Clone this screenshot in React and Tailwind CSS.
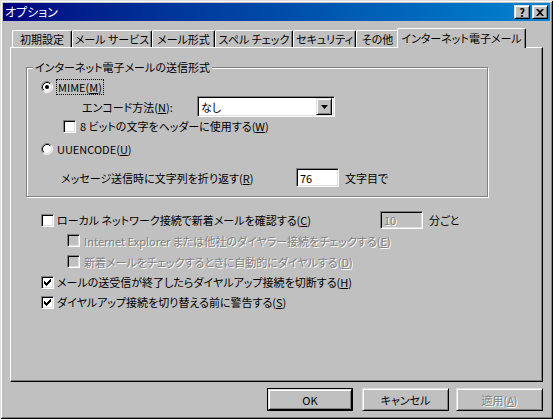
import React from "react";
import clsx from "clsx";

const raised =
  "border border-t-[#dfdfdf] border-l-[#dfdfdf] border-b-black border-r-black shadow-[inset_1px_1px_0_#fff,inset_-1px_-1px_0_#808080]";
const sunken =
  "border border-t-[#808080] border-l-[#808080] border-b-white border-r-white shadow-[inset_1px_1px_0_#000,inset_-1px_-1px_0_#dfdfdf]";
const dim = "text-[#808080] [text-shadow:1px_1px_0_#fff]";

function Check({ checked, disabled }) {
  return (
    <span
      className={clsx(
        "flex h-[13px] w-[13px] shrink-0 items-center justify-center",
        sunken,
        disabled ? "bg-[#c0c0c0]" : "bg-white"
      )}
    >
      {checked && (
        <svg width="7" height="7" viewBox="0 0 7 7">
          <path
            d="M0 2h1v3h-1z M1 3h1v3h-1z M2 4h1v3h-1z M3 3h1v3h-1z M4 2h1v3h-1z M5 1h1v3h-1z M6 0h1v3h-1z"
            fill="#000"
          />
        </svg>
      )}
    </span>
  );
}

function Radio({ checked }) {
  return (
    <svg width="12" height="12" viewBox="0 0 12 12" className="shrink-0">
      <circle cx="6" cy="6" r="4.5" fill="#fff" />
      <path d="M2.11 9.89 A5.5 5.5 0 0 1 9.89 2.11" stroke="#808080" fill="none" />
      <path d="M9.89 2.11 A5.5 5.5 0 0 1 2.11 9.89" stroke="#fff" fill="none" />
      <path d="M2.82 9.18 A4.5 4.5 0 0 1 9.18 2.82" stroke="#000" fill="none" />
      <path d="M9.18 2.82 A4.5 4.5 0 0 1 2.82 9.18" stroke="#dfdfdf" fill="none" />
      {checked && <circle cx="6" cy="6" r="2" fill="#000" />}
    </svg>
  );
}

function Tab({ w, children }) {
  return (
    <div
      className={clsx(
        "flex h-[17px] items-center justify-center rounded-t-[2px] border-l border-t border-r border-l-white border-t-white border-r-black shadow-[inset_-1px_0_0_#808080]",
        w
      )}
    >
      {children}
    </div>
  );
}

function Btn({ w, def, disabled, children }) {
  return (
    <div className={clsx("h-[23px]", w, def && "border border-black")}>
      <div
        className={clsx(
          "flex h-full w-full items-center justify-center",
          raised,
          disabled && dim
        )}
      >
        {children}
      </div>
    </div>
  );
}

export default function App() {
  return (
    <div className="h-[419px] w-[553px] bg-[#c0c0c0] p-[3px] font-['Noto_Sans_CJK_JP','Noto_Sans',sans-serif] text-[11px] leading-[14px] whitespace-nowrap text-black [font-feature-settings:'palt'] shadow-[inset_1px_1px_0_#dfdfdf,inset_-1px_-1px_0_#000,inset_2px_2px_0_#fff,inset_-2px_-2px_0_#808080]">
      {/* title bar */}
      <div className="flex h-[18px] items-center justify-between bg-gradient-to-r from-[#000080] to-[#1084d0] pl-[2px] pr-[2px]">
        <span className="text-[12px] text-white">オプション</span>
        <div className="flex gap-[2px]">
          <div className={clsx("flex h-[14px] w-[16px] items-center justify-center bg-[#c0c0c0] text-[11px] font-bold leading-none", raised)}>
            ?
          </div>
          <div className={clsx("flex h-[14px] w-[16px] items-center justify-center bg-[#c0c0c0]", raised)}>
            <svg width="8" height="7" viewBox="0 0 8 7">
              <path d="M0 0h2l2 2 2-2h2l-3 3.5 3 3.5h-2l-2-2-2 2h-2l3-3.5z" fill="#000" />
            </svg>
          </div>
        </div>
      </div>

      <div className="px-[7px]">
        {/* tabs */}
        <div className="mt-[7px] flex h-[19px] items-end pl-[2px]">
          <Tab w="w-[60px]">初期設定</Tab>
          <Tab w="w-[80px]">メール サービス</Tab>
          <Tab w="w-[63px]">メール形式</Tab>
          <Tab w="w-[78px]">スペル チェック</Tab>
          <Tab w="w-[63px]">セキュリティ</Tab>
          <Tab w="w-[43px]">その他</Tab>
          <div className="relative z-10 -mb-px -ml-[2px] flex h-[20px] w-[129px] justify-center rounded-t-[2px] border-l border-t border-r border-l-white border-t-white border-r-black bg-[#c0c0c0] pt-[2px] shadow-[inset_-1px_0_0_#808080]">
            インターネット電子メール
          </div>
        </div>

        {/* panel */}
        <div className="h-[335px] border border-t-white border-l-white border-b-black border-r-black shadow-[inset_-1px_-1px_0_#808080]">
          <div className="relative ml-[15px] mt-[19px] flex h-[130px] w-[462px] flex-col border border-[#808080] shadow-[inset_1px_1px_0_#fff,1px_1px_0_#fff]">
            <span className="absolute left-[6px] top-[-8px] bg-[#c0c0c0] px-[2px]">
              インターネット電子メールの送信形式
            </span>

            <div className="mt-[11px] flex h-[16px] items-center pl-[14px]">
              <Radio checked />
              <span className="ml-[3px] border border-dotted border-black px-px leading-[14px]">
                MIME(<u>M</u>)
              </span>
            </div>

            <div className="mt-px flex h-[21px] items-center pl-[55px]">
              <span className="w-[115px]">
                エンコード方法(<u>N</u>):
              </span>
              <div className={clsx("flex h-[21px] w-[138px] items-center bg-white p-[2px]", sunken)}>
                <span className="flex-1 pl-[1px]">なし</span>
                <div className={clsx("flex h-[17px] w-[16px] items-center justify-center bg-[#c0c0c0]", raised)}>
                  <svg width="7" height="4" viewBox="0 0 7 4">
                    <path d="M0 0h7l-3.5 4z" fill="#000" />
                  </svg>
                </div>
              </div>
            </div>

            <div className="mt-px flex h-[16px] items-center pl-[36px]">
              <Check />
              <span className="ml-[4px]">
                8 ビットの文字をヘッダーに使用する(<u>W</u>)
              </span>
            </div>

            <div className="mt-[7px] flex h-[16px] items-center pl-[14px]">
              <Radio />
              <span className="ml-[4px]">
                UUENCODE(<u>U</u>)
              </span>
            </div>

            <div className="mt-[11px] flex h-[19px] items-center pl-[34px]">
              <span className="w-[235px]">
                メッセージ送信時に文字列を折り返す(<u>R</u>)
              </span>
              <div className={clsx("flex h-[19px] w-[43px] items-center bg-white pl-[3px]", sunken)}>76</div>
              <span className="ml-[6px]">文字目で</span>
            </div>
          </div>

          <div className="mt-[13px] flex h-[20px] items-center pl-[30px]">
            <Check />
            <span className="ml-[3px] w-[323px]">
              ローカル ネットワーク接続で新着メールを確認する(<u>C</u>)
            </span>
            <div className={clsx("flex h-[18px] w-[43px] items-center bg-[#c0c0c0] pl-[3px]", sunken, dim)}>10</div>
            <span className="ml-[6px]">分ごと</span>
          </div>

          <div className="flex h-[21px] items-center pl-[56px]">
            <Check disabled />
            <span className={clsx("ml-[4px]", dim)}>
              Internet Explorer または他社のダイヤラー接続をチェックする(<u>E</u>)
            </span>
          </div>
          <div className="flex h-[21px] items-center pl-[56px]">
            <Check disabled />
            <span className={clsx("ml-[4px]", dim)}>
              新着メールをチェックするときに自動的にダイヤルする(<u>D</u>)
            </span>
          </div>

          <div className="flex h-[20px] items-center pl-[30px]">
            <Check checked />
            <span className="ml-[3px]">
              メールの送受信が終了したらダイヤルアップ接続を切断する(<u>H</u>)
            </span>
          </div>
          <div className="flex h-[20px] items-center pl-[30px]">
            <Check checked />
            <span className="ml-[3px]">
              ダイヤルアップ接続を切り替える前に警告する(<u>S</u>)
            </span>
          </div>
        </div>

        {/* buttons */}
        <div className="mt-[6px] flex justify-end">
          <Btn w="w-[86px]" def>
            OK
          </Btn>
          <div className="ml-[9px]">
            <Btn w="w-[87px]">キャンセル</Btn>
          </div>
          <div className="ml-[7px]">
            <Btn w="w-[87px]" disabled>
              適用(<u>A</u>)
            </Btn>
          </div>
        </div>
      </div>
    </div>
  );
}
